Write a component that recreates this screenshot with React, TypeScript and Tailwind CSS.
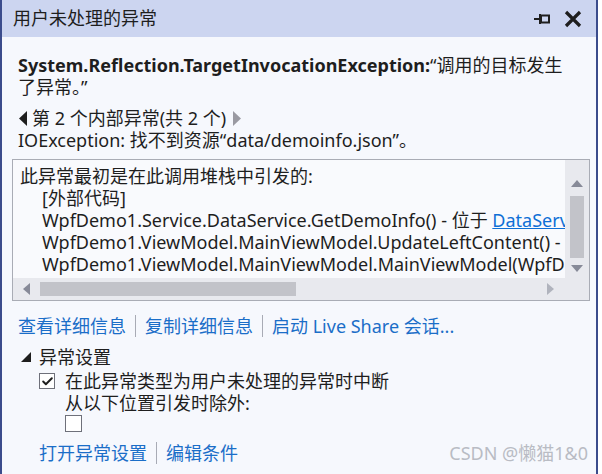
import { Check } from 'lucide-react';

const F = { fontFamily: "'Segoe UI', 'Noto Sans', 'Noto Sans CJK SC', sans-serif" } as const;

const stack = [
  { text: '此异常最初是在此调用堆栈中引发的:', indent: false },
  { text: '[外部代码]', indent: true },
  { text: 'WpfDemo1.Service.DataService.GetDemoInfo() - 位于 ', indent: true, link: 'DataService.cs' },
  { text: 'WpfDemo1.ViewModel.MainViewModel.UpdateLeftContent() - 位于 MainViewModel.cs', indent: true },
  { text: 'WpfDemo1.ViewModel.MainViewModel.MainViewModel(WpfDemo1.Model)', indent: true },
];

function Sep() {
  return <span className="mx-[9px] inline-block h-[22px] w-px bg-[#a8abb5] align-middle" />;
}

export default function App() {
  return (
    <div className="flex h-[474px] w-[602px] overflow-hidden bg-white text-[#1e1e1e]" style={F}>
      <div className="flex w-[598px] flex-col border-x-2 border-[#3b4c8c] bg-[#f6f8fd]">
        {/* title bar */}
        <div className="flex h-[37px] shrink-0 items-center bg-[#ccd5f0] pl-[11px] pr-[14px]">
          <span className="text-[18px] text-[#1e1e1e]">用户未处理的异常</span>
          <div className="ml-auto flex items-center gap-[14px]">
            <svg width="16" height="10" viewBox="0 0 16 10">
              <rect x="0" y="4" width="5" height="2" fill="#1e1e1e" />
              <rect x="5" y="0" width="2" height="10" fill="#1e1e1e" />
              <rect x="7" y="1.5" width="8" height="7" fill="none" stroke="#1e1e1e" strokeWidth="2" />
            </svg>
            <svg width="18" height="18" viewBox="0 0 18 18">
              <path d="M2 2 L16 16 M16 2 L2 16" stroke="#1e1e1e" strokeWidth="3.2" />
            </svg>
          </div>
        </div>

        <div className="flex flex-col pl-[16px] pr-[6px] pt-[17px] text-[18px] leading-[22px]">
          <p className="leading-[22px]">
            <span className="font-bold">System.Reflection.TargetInvocationException:</span>“调用的目标发生
            <br />
            了异常。”
          </p>

          <div className="mt-[9px] flex items-center">
            <svg width="10" height="15" viewBox="0 0 10 15" className="mr-[4px]">
              <path d="M9 0 L1 7.5 L9 15 Z" fill="#1e1e1e" />
            </svg>
            <span>第 2 个内部异常(共 2 个)</span>
            <svg width="10" height="15" viewBox="0 0 10 15" className="ml-[6px]">
              <path d="M1 0 L9 7.5 L1 15 Z" fill="#9a9aa2" />
            </svg>
          </div>
          <p>IOException: 找不到资源“data/demoinfo.json”。</p>

          {/* call stack box */}
          <div className="mt-[8px] ml-[-6px] flex h-[142px] flex-col border border-[#a9acb5] bg-[#f9fafd]">
            <div className="flex min-h-0 flex-1">
              <div className="min-w-0 flex-1 overflow-hidden pl-[7px] pt-[5px]">
                {stack.map((s) => (
                  <div key={s.text} className={`whitespace-nowrap ${s.indent ? 'pl-[22px]' : ''}`}>
                    {s.text}
                    {s.link && <span className="text-[#0e6fd6] underline">{s.link}</span>}
                  </div>
                ))}
              </div>
              {/* vertical scrollbar */}
              <div className="flex w-[24px] flex-col items-center bg-[#e8e9ee] pt-[20px]">
                <svg width="12" height="7" viewBox="0 0 12 7">
                  <path d="M0 7 L6 0 L12 7 Z" fill="#878a98" />
                </svg>
                <div className="mt-[9px] h-[62px] w-[14px] bg-[#c2c3c9]" />
                <svg width="12" height="7" viewBox="0 0 12 7" className="mt-[7px]">
                  <path d="M0 0 L6 7 L12 0 Z" fill="#878a98" />
                </svg>
              </div>
            </div>
            {/* horizontal scrollbar */}
            <div className="flex h-[22px] shrink-0 items-center bg-[#e8e9ee] pr-[24px]">
              <svg width="7" height="12" viewBox="0 0 7 12" className="ml-[10px]">
                <path d="M7 0 L0 6 L7 12 Z" fill="#878a98" />
              </svg>
              <div className="ml-[10px] h-[14px] w-[256px] bg-[#c2c3c9]" />
              <svg width="7" height="12" viewBox="0 0 7 12" className="ml-auto mr-[11px]">
                <path d="M0 0 L7 6 L0 12 Z" fill="#b0b3bd" />
              </svg>
            </div>
          </div>

          <div className="mt-[14px] flex items-center text-[#1b6ec8]">
            <span>查看详细信息</span>
            <Sep />
            <span>复制详细信息</span>
            <Sep />
            <span>启动 Live Share 会话...</span>
          </div>

          <div className="mt-[9px] flex items-center">
            <svg width="10" height="10" viewBox="0 0 10 10" className="ml-[3px] mr-[8px]">
              <path d="M10 0 L10 10 L0 10 Z" fill="#1e1e1e" />
            </svg>
            <span>异常设置</span>
          </div>

          <div className="pl-[21px]">
            <div className="mt-[2px] flex items-center">
              <div className="flex h-[16px] w-[16px] items-center justify-center border border-[#6e707a] bg-white">
                <Check size={13} strokeWidth={3.6} color="#1e1e1e" />
              </div>
              <span className="ml-[10px]">在此异常类型为用户未处理的异常时中断</span>
            </div>
            <div className="pl-[26px]">
              <p>从以下位置引发时除外:</p>
              <div className="mt-[1px] h-[17px] w-[17px] border border-[#6e707a] bg-white" />
            </div>
            <div className="mt-[10px] flex items-center text-[#1b6ec8]">
              <span>打开异常设置</span>
              <Sep />
              <span>编辑条件</span>
              <span className="ml-auto mr-[2px] text-[#b9bcc4]">CSDN @懒猫1&amp;0</span>
            </div>
          </div>
        </div>
      </div>
      <div className="flex-1 bg-white" />
    </div>
  );
}
